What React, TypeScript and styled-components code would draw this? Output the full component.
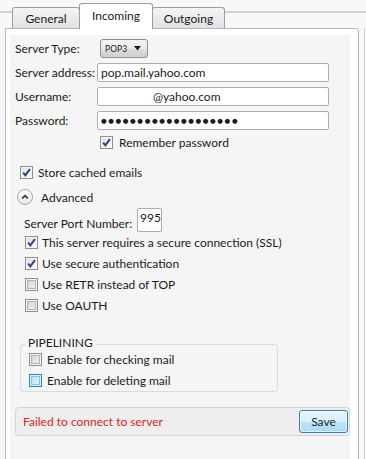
import styled, { createGlobalStyle } from "styled-components";

const GlobalStyle = createGlobalStyle`
  html, body {
    margin: 0;
    padding: 0;
    background: #f8f8f8;
  }
  body {
    font-family: Lato, "Segoe UI", "Noto Sans", sans-serif;
    font-size: 12px;
    color: #1b1b1b;
  }
  * {
    box-sizing: border-box;
  }
`;

const CheckMark = () => (
    <svg width="11" height="11" viewBox="0 0 11 11">
        <path d="M2.2 5.6 L4.4 8.4 L8.9 2.2" fill="none" stroke="#2c4488" strokeWidth="2"/>
    </svg>
);

const Check = ({checked, hover}: { checked?: boolean; hover?: boolean }) => (
    <Box $checked={checked} $hover={hover}>{checked && <CheckMark/>}</Box>
);

export default function App() {
    return (
        <Window>
            <GlobalStyle/>
            <TabStrip>
                <Tab $w={68}>General</Tab>
                <Tab $w={74} $active>Incoming</Tab>
                <Tab $w={73}>Outgoing</Tab>
            </TabStrip>
            <Body>
                <Panel>
                    <Inner>
                        <FieldGrid>
                            <Label>Server Type:</Label>
                            <Select>
                                <span>POP3</span>
                                <svg width="7" height="5" viewBox="0 0 7 5">
                                    <path d="M0 0 H7 L3.5 4.5 Z" fill="#1b1b1b"/>
                                </svg>
                            </Select>
                            <Label>Server address:</Label>
                            <Field readOnly value="pop.mail.yahoo.com"/>
                            <Label>Username:</Label>
                            <Field readOnly value="@yahoo.com" $indent={52}/>
                            <Label>Password:</Label>
                            <Field readOnly value={"●".repeat(19)} $secret/>
                            <span/>
                            <CheckRow $h={14} $indent={3} $gap={6}>
                                <Check checked/>
                                Remember password
                            </CheckRow>
                        </FieldGrid>

                        <CheckRow $h={16} $top={15} $indent={5}>
                            <Check checked/>
                            Store cached emails
                        </CheckRow>

                        <Expander>
                            <ExpandIcon>
                                <svg width="14" height="14" viewBox="0 0 14 14">
                                    <path d="M4.2 8.4 L7 5.6 L9.8 8.4" fill="none" stroke="#333" strokeWidth="1.6"/>
                                </svg>
                            </ExpandIcon>
                            Advanced
                        </Expander>

                        <PortRow>
                            <PortLabel>Server Port Number:</PortLabel>
                            <PortBox>995</PortBox>
                        </PortRow>

                        <CheckRow $indent={10} $gap={4}>
                            <Check checked/>
                            This server requires a secure connection (SSL)
                        </CheckRow>
                        <CheckRow $indent={10} $gap={4}>
                            <Check checked/>
                            Use secure authentication
                        </CheckRow>
                        <CheckRow $indent={10} $gap={4}>
                            <Check/>
                            Use RETR instead of TOP
                        </CheckRow>
                        <CheckRow $indent={10} $gap={4}>
                            <Check/>
                            Use OAUTH
                        </CheckRow>

                        <Group>
                            <Legend>PIPELINING</Legend>
                            <CheckRow $indent={8}>
                                <Check/>
                                Enable for checking mail
                            </CheckRow>
                            <CheckRow $indent={8}>
                                <Check hover/>
                                Enable for deleting mail
                            </CheckRow>
                        </Group>

                        <StatusBar>
                            <ErrorText>Failed to connect to server</ErrorText>
                            <SaveButton>Save</SaveButton>
                        </StatusBar>
                    </Inner>
                </Panel>
                <Edge/>
            </Body>
        </Window>
    );
}

const Window = styled.div`
    width: 366px;
    height: 459px;
    overflow: hidden;
    display: flex;
    flex-direction: column;
`

const TabStrip = styled.div`
    height: 28px;
    flex: none;
    display: flex;
    align-items: flex-end;
    padding-left: 12px;
    background: linear-gradient(to bottom, transparent 11px, #c9d4e2 11px, #c9d4e2 13px, transparent 13px);
`

const Tab = styled.div<{ $w: number; $active?: boolean }>`
    position: relative;
    z-index: ${p => p.$active ? 2 : 1};
    width: ${p => p.$w}px;
    height: ${p => p.$active ? 26 : 21}px;
    margin-bottom: ${p => p.$active ? -1 : 0}px;
    margin-left: -1px;
    display: flex;
    align-items: center;
    justify-content: center;
    padding-bottom: ${p => p.$active ? 2 : 0}px;
    border: 1px solid #9a9ea4;
    border-bottom: none;
    border-radius: 3px 3px 0 0;
    background: ${p => p.$active ? "#ffffff" : "linear-gradient(to bottom, #f4f4f4, #e2e2e2)"};
    color: #1b1b1b;

    &:first-child {
        margin-left: 0;
    }
`

const Body = styled.div`
    flex: 1;
    display: flex;
    align-items: stretch;
    min-height: 0;
`

const Panel = styled.div`
    margin-left: 5px;
    width: 354px;
    height: 440px;
    flex: none;
    background: #ffffff;
    border: 1px solid #b4b9bf;
    border-top-right-radius: 3px;
    padding: 6px 8px 0 4px;
`

const Edge = styled.div`
    width: 2px;
    margin-left: 5px;
    border-left: 1px solid #c9ccd0;
    background: #ffffff;
`

const Inner = styled.div`
    background: #f5f5f5;
    height: 100%;
    padding: 4px 0 0 5px;
    display: flex;
    flex-direction: column;
`

const FieldGrid = styled.div`
    display: grid;
    grid-template-columns: 82px 232px;
    row-gap: 5px;
    align-items: center;
`

const Label = styled.div`
    white-space: nowrap;
`

const Select = styled.div`
    margin-left: 3px;
    width: 48px;
    height: 19px;
    display: flex;
    align-items: center;
    justify-content: space-between;
    padding: 0 6px 0 4px;
    border: 1px solid #8e8f8f;
    border-radius: 3px;
    background: linear-gradient(to bottom, #f4f4f4 0%, #ebebeb 50%, #dddddd 51%, #cfcfcf 100%);
    font-size: 8.5px;
    letter-spacing: 0.1px;
`

const Field = styled.input<{ $indent?: number; $secret?: boolean }>`
    width: 232px;
    height: 19px;
    margin: 0;
    border: 1px solid #abadb3;
    border-radius: 2px;
    background: #ffffff;
    padding: 0 0 0 ${p => 3 + (p.$indent ?? 0)}px;
    font-family: ${p => p.$secret ? `"DejaVu Sans", sans-serif` : `Lato, "Segoe UI", sans-serif`};
    font-size: ${p => p.$secret ? 6.5 : 12}px;
    letter-spacing: ${p => p.$secret ? 1.6 : 0}px;
    color: #1b1b1b;
    outline: none;
`

const CheckRow = styled.div<{ $h?: number; $top?: number; $indent?: number; $gap?: number }>`
    display: flex;
    align-items: center;
    gap: ${p => p.$gap ?? 5}px;
    height: ${p => p.$h ?? 21}px;
    margin-top: ${p => p.$top ?? 0}px;
    margin-left: ${p => p.$indent ?? 0}px;
    white-space: nowrap;
`

const Box = styled.span<{ $checked?: boolean; $hover?: boolean }>`
    width: 13px;
    height: 13px;
    flex: none;
    display: flex;
    align-items: center;
    justify-content: center;
    border: 1px solid ${p => p.$hover ? "#3c7fb1" : "#8e8f8f"};
    box-shadow: ${p => p.$checked
            ? "inset 0 0 0 1px #f4f4f4"
            : p.$hover
                    ? "inset 0 0 0 1px #def4fd, inset 0 0 0 2px #79c6f9"
                    : "inset 0 0 0 1px #f4f4f4, inset 0 0 0 2px #b1b5ba"};
    background: ${p => p.$checked
            ? "linear-gradient(135deg, #dcdcdc, #ffffff)"
            : p.$hover
                    ? "linear-gradient(135deg, #b1dffa, #e9f6fd)"
                    : "linear-gradient(135deg, #c9cccf, #f7f7f7)"};
`

const Expander = styled.div`
    display: flex;
    align-items: center;
    gap: 8px;
    height: 16px;
    margin-top: 9px;
    margin-left: 2px;
`

const ExpandIcon = styled.span`
    width: 16px;
    height: 16px;
    border-radius: 50%;
    border: 1px solid #a3a7ac;
    background: linear-gradient(to bottom, #ffffff, #e6e6e6);
    display: flex;
    align-items: center;
    justify-content: center;
`

const PortRow = styled.div`
    display: flex;
    align-items: flex-end;
    margin-top: 3px;
    margin-left: 9px;
    height: 24px;
`

const PortLabel = styled.div`
    padding-bottom: 1px;
    width: 113px;
    white-space: nowrap;
`

const PortBox = styled.div`
    width: 25px;
    height: 24px;
    border: 1px solid #abadb3;
    border-radius: 2px;
    background: #ffffff;
    padding: 1px 0 0 2px;
`

const Group = styled.div`
    margin-top: 28px;
    margin-left: 5px;
    width: 258px;
    border: 1px solid #d5dce2;
    border-radius: 3px;
`

const Legend = styled.div`
    width: fit-content;
    margin: -8px 0 0 4px;
    padding: 0 3px;
    line-height: 12px;
    background: #f5f5f5;
`

const StatusBar = styled.div`
    margin-top: 15px;
    height: 29px;
    display: flex;
    align-items: center;
    justify-content: space-between;
    padding: 0 1px 0 7px;
    border: 1px solid #d6d6d6;
    border-radius: 4px;
    background: #eeeeee;
`

const ErrorText = styled.span`
    color: #d81e1e;
`

const SaveButton = styled.button`
    width: 49px;
    height: 23px;
    margin: 0;
    padding: 0;
    border: 1px solid #3c7fb1;
    border-radius: 3px;
    background: linear-gradient(to bottom, #eaf6fd 0%, #d9f0fc 50%, #bee6fd 51%, #a7d9f5 100%);
    box-shadow: inset 0 0 0 1px rgba(255, 255, 255, 0.6);
    font-family: inherit;
    font-size: 12px;
    color: #1b1b1b;
`
